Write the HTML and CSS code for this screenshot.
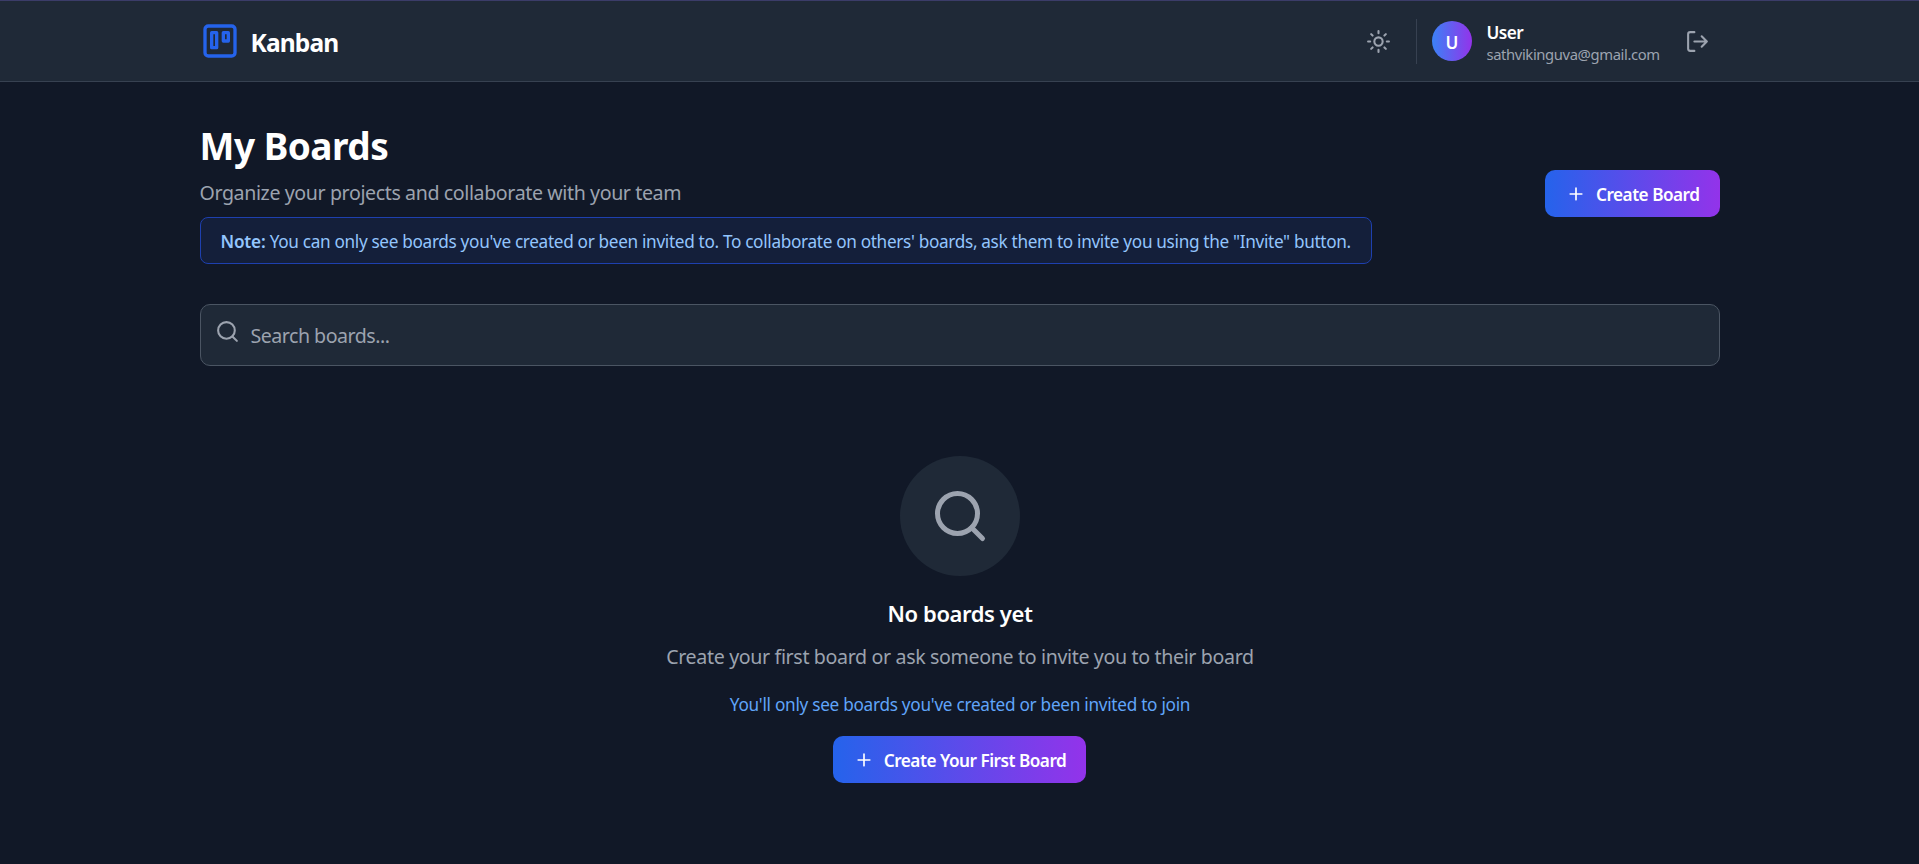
FILE: index.html
```html
<!DOCTYPE html>
<html lang="en">
<head>
<meta charset="utf-8">
<title>Kanban</title>
<link rel="stylesheet" href="styles.css">
</head>
<body>
<header class="header">
  <div class="container header-row">
    <div class="brand">
      <svg class="logo" viewBox="0 0 24 24"><rect x="3" y="3" width="18" height="18" rx="2"/><rect x="7" y="7" width="3" height="9"/><rect x="14" y="7" width="3" height="5"/></svg>
      <span class="brand-name">Kanban</span>
    </div>
    <div class="actions">
      <button class="icon-button" aria-label="Toggle theme">
        <svg class="icon" viewBox="0 0 24 24"><circle cx="12" cy="12" r="4"/><path d="M12 2v2M12 20v2M4.93 4.93l1.41 1.41M17.66 17.66l1.41 1.41M2 12h2M20 12h2M6.34 17.66l-1.41 1.41M19.07 4.93l-1.41 1.41"/></svg>
      </button>
      <div class="profile">
        <div class="avatar">U</div>
        <div class="identity">
          <div class="user-name">User</div>
          <div class="user-email">sathvikinguva@gmail.com</div>
        </div>
        <button class="icon-button" aria-label="Log out">
          <svg class="icon" viewBox="0 0 24 24"><path d="M9 21H5a2 2 0 0 1-2-2V5a2 2 0 0 1 2-2h4"/><path d="M16 17l5-5-5-5M21 12H9"/></svg>
        </button>
      </div>
    </div>
  </div>
</header>
<main class="container main">
  <section class="intro">
    <div>
      <h1 class="title">My Boards</h1>
      <p class="subtitle">Organize your projects and collaborate with your team</p>
      <p class="note"><strong class="note-label">Note:</strong> You can only see boards you've created or been invited to. To collaborate on others' boards, ask them to invite you using the "Invite" button.</p>
    </div>
    <button class="primary">
      <svg class="plus" viewBox="0 0 24 24"><path d="M5 12h14M12 5v14"/></svg>
      <span class="primary-label">Create Board</span>
    </button>
  </section>
  <label class="search">
    <svg class="icon search-icon" viewBox="0 0 24 24"><circle cx="11" cy="11" r="8"/><path d="M21 21l-4.3-4.3"/></svg>
    <input class="search-input" type="text" placeholder="Search boards...">
  </label>
  <section class="empty">
    <div class="empty-circle">
      <svg class="empty-icon" viewBox="0 0 24 24"><circle cx="11" cy="11" r="8"/><path d="M21 21l-4.3-4.3"/></svg>
    </div>
    <h2 class="empty-title">No boards yet</h2>
    <p class="empty-text">Create your first board or ask someone to invite you to their board</p>
    <p class="empty-hint">You'll only see boards you've created or been invited to join</p>
    <button class="primary">
      <svg class="plus" viewBox="0 0 24 24"><path d="M5 12h14M12 5v14"/></svg>
      <span class="primary-label">Create Your First Board</span>
    </button>
  </section>
</main>
</body>
</html>
```
FILE: styles.css
```css
* { box-sizing: border-box; margin: 0; padding: 0; }
html { overflow: hidden; }
body {
  min-height: 100vh;
  background: #111827;
  color: #fff;
  font-family: "Noto Sans", sans-serif;
}
button { border: 0; background: none; color: inherit; font: inherit; cursor: pointer; }
svg { display: block; flex: none; fill: none; stroke: currentColor; stroke-width: 2; stroke-linecap: round; stroke-linejoin: round; }

.container { width: 1520px; margin: 0 auto; }

.header {
  height: 82px;
  background: #1f2937;
  border-top: 1px solid #3b3c69;
  border-bottom: 1px solid #374151;
}
.header-row { display: flex; justify-content: space-between; align-items: center; height: 80px; }
.brand { display: flex; align-items: center; gap: 10px; }
.logo { width: 40px; height: 40px; color: #2563eb; }
.brand-name { padding: 3px 0 0 1px; font-size: 24.5px; font-weight: 700; line-height: 34px; letter-spacing: -0.85px; }
.actions { display: flex; align-items: center; gap: 15px; }
.icon-button { padding: 10px; color: #9ca3af; }
.icon { width: 25px; height: 25px; }
.profile { display: flex; align-items: center; height: 45px; padding-left: 15px; border-left: 1px solid #374151; }
.avatar {
  display: flex;
  align-items: center;
  justify-content: center;
  width: 40px;
  height: 40px;
  padding: 2px 0 0 1px;
  border-radius: 50%;
  background: linear-gradient(to right, #3b82f6, #9333ea);
  font-size: 17.2px;
  font-weight: 600;
}
.identity { width: 173px; margin: 2px 15px 0; white-space: nowrap; }
.user-name { font-size: 17.2px; font-weight: 600; line-height: 23px; letter-spacing: -0.5px; }
.user-email { color: #9ca3af; font-size: 14.8px; line-height: 20px; letter-spacing: -0.39px; }

.main { padding-top: 41px; }
.intro { display: flex; justify-content: space-between; align-items: center; }
.title { font-size: 37px; font-weight: 700; line-height: 45px; letter-spacing: -0.5px; }
.subtitle { margin-top: 10px; color: #9ca3af; font-size: 19.6px; line-height: 29px; letter-spacing: -0.39px; }
.note {
  width: 1172px;
  height: 47px;
  margin-top: 10px;
  padding: 0 20px;
  border: 1px solid #1e40af;
  border-radius: 8px;
  background: #141f3a;
  color: #93c5fd;
  font-size: 17.2px;
  line-height: 47px;
  letter-spacing: -0.325px;
  white-space: nowrap;
}
.note-label { font-weight: 600; letter-spacing: -0.2px; }

.primary {
  display: inline-flex;
  align-items: center;
  gap: 10px;
  height: 47px;
  padding: 0 20px 0 21px;
  border-radius: 10px;
  background: linear-gradient(to right, #2563eb, #9333ea);
  white-space: nowrap;
}
.plus { width: 20px; height: 20px; }
.primary-label { padding-top: 2px; font-size: 17.2px; font-weight: 600; line-height: 25px; letter-spacing: -0.5px; }

.search {
  display: flex;
  height: 62px;
  margin-top: 40px;
  padding: 0 14px;
  border: 1px solid #4b5563;
  border-radius: 10px;
  background: #1f2937;
}
.search-icon { margin-top: 14px; color: #9ca3af; }
.search-input {
  flex: 1;
  margin-left: 11px;
  border: 0;
  outline: 0;
  background: none;
  color: #fff;
  font: 19.6px "Noto Sans", sans-serif;
  letter-spacing: -0.5px;
}
.search-input::placeholder { color: #9ca3af; opacity: 1; }

.empty { display: flex; flex-direction: column; align-items: center; margin-top: 90px; }
.empty-circle {
  display: flex;
  align-items: center;
  justify-content: center;
  width: 120px;
  height: 120px;
  border-radius: 50%;
  background: #1f2937;
  color: #9ca3af;
}
.empty-icon { width: 60px; height: 60px; }
.empty-title { margin-top: 20px; padding-left: 1px; font-size: 22px; font-weight: 600; line-height: 34px; letter-spacing: -0.4px; }
.empty-text { margin-top: 12px; padding-left: 1px; color: #9ca3af; font-size: 19.6px; line-height: 29px; letter-spacing: -0.35px; }
.empty-hint { margin: 21px 0 19px; padding-left: 1px; color: #60a5fa; font-size: 17.2px; line-height: 25px; letter-spacing: -0.28px; }
```
